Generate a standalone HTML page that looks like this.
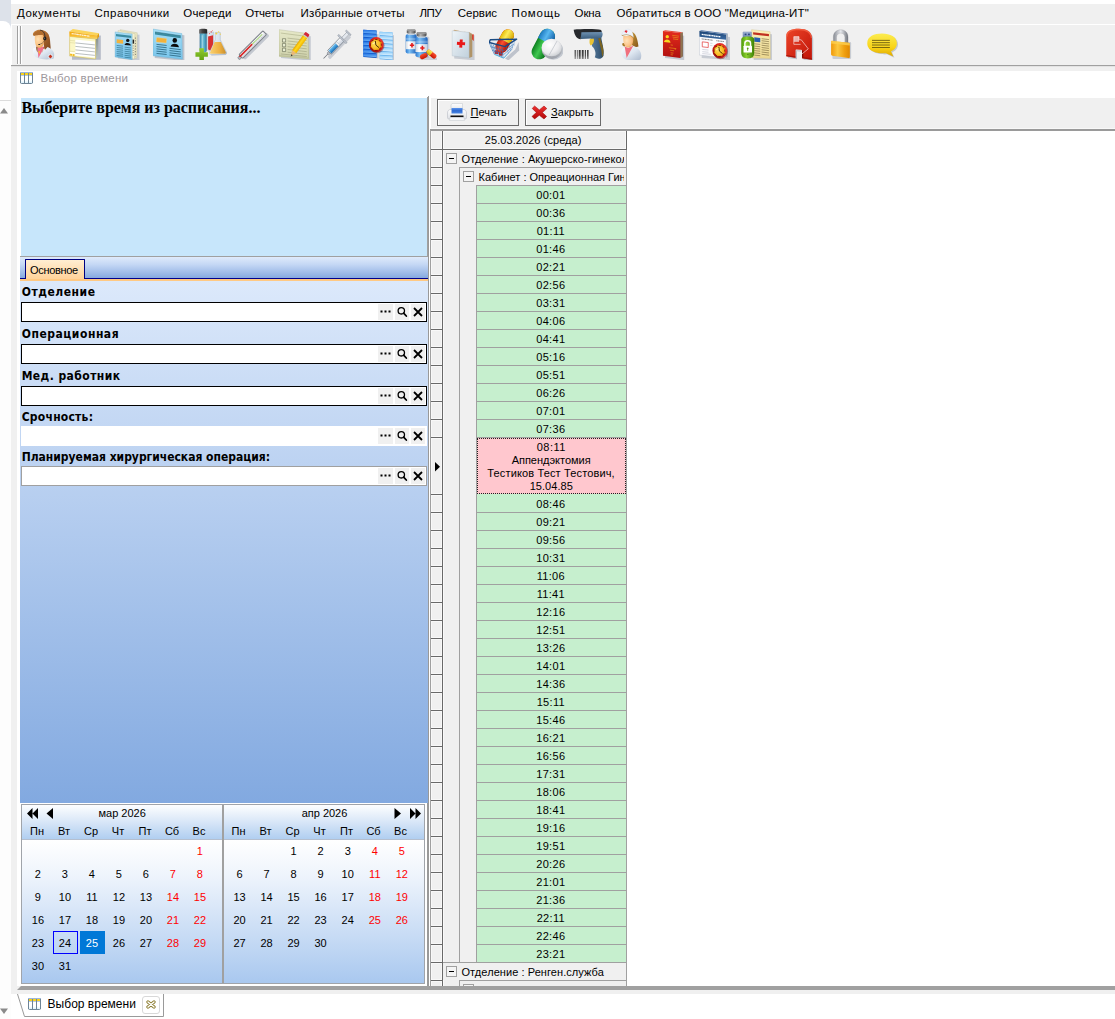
<!DOCTYPE html>
<html lang="ru"><head><meta charset="utf-8"><title>Выбор времени</title>
<style>
html,body{margin:0;padding:0}
body{width:1115px;height:1019px;overflow:hidden;background:#fff;position:relative;font-family:"Liberation Sans",sans-serif;font-size:11px;color:#000}
div,span,svg{position:absolute;box-sizing:border-box}
.t{white-space:nowrap;line-height:1}
.m{font-size:11.5px}
.b{font-family:"DejaVu Sans Condensed","DejaVu Sans","Liberation Sans",sans-serif;font-weight:bold;font-size:12px}
.r{color:#f00}
.c{text-align:center}
u{text-decoration:underline}
</style></head><body>

<div style="left:0;top:0;width:11px;height:1019px;background:#fdfdfd"></div>
<div style="left:0;top:0;width:11px;height:30px;background:#dde2ea"></div>
<div style="left:-11px;top:21px;width:22px;height:80px;background:#fff;border-radius:0 8px 0 0"></div>
<div style="left:0;top:100px;width:11px;height:1px;background:#dcdcdc"></div>
<svg style="left:0;top:107px" width="9" height="7"><path d="M0 6.5 L4 1 L8 6.5Z" fill="#8a8a8a"/></svg>
<svg style="left:0;top:1008px" width="9" height="7"><path d="M0 0.5 L8 0.5 L4 6Z" fill="#8a8a8a"/></svg>
<div style="left:11px;top:4px;width:1104px;height:20px;background:#f0f0f0"></div>
<div style="left:12px;top:25px;width:1103px;height:40px;background:#f0f0f0"></div>
<div style="left:11px;top:65px;width:1104px;height:1px;background:#a0a0a0"></div>
<div style="left:11px;top:66px;width:1104px;height:1px;background:#e3e3e3"></div>
<div style="left:11px;top:67px;width:1104px;height:927px;background:#f0f0f0"></div>
<div style="left:17px;top:71px;width:1098px;height:27px;background:#fff"></div>
<div style="left:17px;top:96px;width:411px;height:890px;background:#fff"></div>
<span id="t1" class="t m" style="left:17px;top:8.4px;letter-spacing:0.498px;">Документы</span>
<span id="t2" class="t m" style="left:94.5px;top:8.4px;letter-spacing:0.496px;">Справочники</span>
<span id="t3" class="t m" style="left:183.3px;top:8.4px;letter-spacing:0.186px;">Очереди</span>
<span id="t4" class="t m" style="left:245.3px;top:8.4px;letter-spacing:-0.217px;">Отчеты</span>
<span id="t5" class="t m" style="left:300.5px;top:8.4px;letter-spacing:0.251px;">Избранные отчеты</span>
<span id="t6" class="t m" style="left:419.4px;top:8.4px;letter-spacing:-0.356px;">ЛПУ</span>
<span id="t7" class="t m" style="left:457.8px;top:8.4px;letter-spacing:-0.026px;">Сервис</span>
<span id="t8" class="t m" style="left:511.6px;top:8.4px;letter-spacing:0.795px;">Помощь</span>
<span id="t9" class="t m" style="left:574.6px;top:8.4px;letter-spacing:-0.142px;">Окна</span>
<span id="t10" class="t m" style="left:616.5px;top:8.4px;letter-spacing:0.163px;">Обратиться в ООО &quot;Медицина-ИТ&quot;</span>
<div style="left:17px;top:26px;width:1px;height:38px;background:#a0a0a0"></div>
<div style="left:18px;top:26px;width:1px;height:38px;background:#fff"></div>
<div style="left:20px;top:26px;width:1px;height:38px;background:#a0a0a0"></div>
<div style="left:21px;top:26px;width:1px;height:38px;background:#fff"></div>
<svg style="left:27px;top:28px" width="32" height="32" viewBox="0 0 32 32"><defs><linearGradient id="opc" x1="0" y1="0" x2="1" y2="1"><stop offset="0" stop-color="#fbfdff"/><stop offset="0.5" stop-color="#dfe8f2"/><stop offset="1" stop-color="#aebccf"/></linearGradient><linearGradient id="oph" x1="0" y1="0" x2="1" y2="1"><stop offset="0" stop-color="#c9853f"/><stop offset="0.5" stop-color="#a9652b"/><stop offset="1" stop-color="#7a431c"/></linearGradient><radialGradient id="opf" cx="0.35" cy="0.35" r="0.75"><stop offset="0" stop-color="#ffe0b4"/><stop offset="0.6" stop-color="#fbc382"/><stop offset="1" stop-color="#e89a50"/></radialGradient></defs><path d="M10.5 2 C7.5 3 5.2 5.2 6.2 7.2 C7 8 8 7.4 8.6 7.2 L16.5 9 L17 19 C17.2 21.5 19 23.2 21 22.6 C23 22 24 21 23.6 19.2 C23 14 23.4 10.5 21.6 6.6 C20 3.2 16 0.8 10.5 2Z" fill="url(#oph)"/><path d="M6 20.4 C5.6 24 6.6 27.6 8.6 29 C12 31.4 21 32.4 26.6 30.6 C27.4 27.6 27.6 24.6 25.6 22.6 C24 20.6 22 19.4 20.6 19 L16 24 L11 20 C9 19.6 7 19.8 6 20.4Z" fill="url(#opc)"/><path d="M10.4 18.6 L11.4 30 L17.6 18.8Z" fill="#f2708c"/><path d="M11.4 23.5 l.9 2.8 l.9 -3.6z" fill="#fbc02a"/><path d="M9.2 18.6 C9 21 9.6 23 10.6 24.6 L10.6 19Z M16.4 19.6 C16.8 22 15.6 24 14.6 25 L17.6 19Z" fill="#8c5224"/><path d="M8 7.6 C7.6 11 7.8 14.6 8.8 17.2 C10 19.6 12.6 20.6 14.4 19.6 C16.4 18.4 17.2 15.6 17.2 12.6 C17.2 10 16.8 8 15.6 6.6Z" fill="url(#opf)"/><path d="M6.2 7 C7 4.6 10 2.6 14 3.2 C16 3.6 17.4 5 17.8 7 C15 6.6 11.4 6.8 8.4 7.6 C7.4 8 6.4 7.8 6.2 7Z" fill="#b06c2e"/><path d="M13.2 2.2 C16.6 2.6 18.2 6 17.9 9.4" fill="none" stroke="#2a2a2a" stroke-width="0.9"/><ellipse cx="17.8" cy="10.6" rx="1.6" ry="2" fill="#1e1e1e"/><ellipse cx="17.5" cy="10.2" rx=".6" ry=".8" fill="#666"/><path d="M17.4 12.6 C16.6 14.6 14.6 15.8 12.4 16.4" fill="none" stroke="#3a3a3a" stroke-width=".5"/><ellipse cx="12.1" cy="16.5" rx="1" ry=".6" fill="#161616"/><path d="M23.4 26.6 L25.3 28.5 L23.4 30.4 L21.5 28.5Z" fill="#c8331c"/><circle cx="23.4" cy="28.5" r="2.3" fill="none" stroke="#fff" stroke-width=".5" opacity=".7"/></svg>
<svg style="left:69px;top:28px" width="32" height="32" viewBox="0 0 32 32"><defs><linearGradient id="ytt" x1="0" y1="0" x2="0" y2="1"><stop offset="0" stop-color="#f3a712"/><stop offset="0.5" stop-color="#f7b828"/><stop offset="1" stop-color="#fbd662"/></linearGradient><linearGradient id="yts" x1="0" y1="0" x2="0" y2="1"><stop offset="0" stop-color="#88928f"/><stop offset="1" stop-color="#bcc6c4"/></linearGradient></defs><path d="M3 9 L31.8 7.5 L31.8 31.8 L3 31.8Z" fill="#7c86a0" opacity=".5"/><path d="M26.6 11 L29.3 9.5 L29.3 29.2 L26.6 31Z" fill="url(#yts)"/><path d="M0.6 8.4 L26.6 11 L26.6 31 L0.6 28Z" fill="#fbf7c6" stroke="#cdb54e" stroke-width=".5"/><path d="M6.4 11.6 L25.9 13.6 L25.9 29.6 L6.4 27.4Z" fill="#fff"/><path d="M6.4 14.9 L25.9 16.9M6.4 18.4 L25.9 20.4M6.4 21.9 L25.9 23.9M6.4 25.4 L25.9 27.4" stroke="#a8aeb0" stroke-width=".8"/><path d="M1 12.4 L6 12.9M1 14.6 L6 15.1M1 23.2 L6 23.7" stroke="#ddd8a0" stroke-width=".6"/><path d="M1 24 L6 24.5 L6 25.8 L1 25.3Z" fill="#fff"/><path d="M1.1 25.8 L3 26 L3 27.8 L1.1 27.6Z M3.6 26.1 L5.5 26.3 L5.5 28.1 L3.6 27.9Z" fill="#f3b81c"/><path d="M0.3 3.4 L3.9 1.1 L30 5.2 L28.2 7.5Z" fill="#fbd45a"/><path d="M28.2 7.5 L30 5.2 L30 8.8 L28.2 11.1Z" fill="#e09a0c"/><path d="M0.3 3.4 L28.2 7.5 L28.2 11.1 L0.3 8.4Z" fill="url(#ytt)"/><path d="M2.6 5.6 L21 8.2" stroke="#fff" stroke-width="1.3" opacity=".8" stroke-dasharray="2.2 .5 1.6 .4 2.6 .5"/></svg>
<svg style="left:111px;top:28px" width="32" height="32" viewBox="0 0 32 32"><defs><linearGradient id="ppb" x1="0" y1="0" x2="0" y2="1"><stop offset="0" stop-color="#a4dcf6"/><stop offset="1" stop-color="#74c0e8"/></linearGradient></defs><g transform="scale(0.11299) translate(-787.70,-35.4)"><path d="M850 75 L1040 95 L1040 325 L850 305Z" fill="#8c96a8" opacity=".4"/><path d="M870 50 L1020 78 L1016 303 L870 290Z" fill="#ece8c4" stroke="#b8b490" stroke-width="3"/><path d="M850 58 L1000 86 L996 310 L850 292Z" fill="#f4f0d0" stroke="#b8b490" stroke-width="3"/><path d="M1004 120v170" stroke="#555" stroke-width="6" stroke-dasharray="10 14"/><path d="M978 138 h14 v36 h-14z" fill="#222"/><path d="M984 190v100" stroke="#444" stroke-width="6" stroke-dasharray="8 12"/><path d="M824 70 L975 88 L975 316 L824 292Z" fill="url(#ppb)" stroke="#5aa6c8" stroke-width="3"/><path d="M832 88 L967 104 L967 125 L832 108Z" fill="#3b8ca2"/><path d="M838 135 L895 141 L895 175 L838 169Z" fill="#f2b23c"/><circle cx="936" cy="145" r="15" fill="#111"/><path d="M908 185 C911 160 961 162 964 190Z" fill="#111"/><path d="M838 190 L895 196M838 208 L895 214M838 226 L895 232M838 244 L895 250M838 262 L895 268M838 280 L895 285M908 205 L964 212M908 223 L964 230M908 241 L964 248M908 259 L964 266M908 277 L964 284M908 294 L964 300" stroke="#2c6f88" stroke-width="6"/></g></svg>
<svg style="left:153px;top:28px" width="32" height="32" viewBox="0 0 32 32"><defs><linearGradient id="pab" x1="0" y1="0" x2="0" y2="1"><stop offset="0" stop-color="#a6dff8"/><stop offset="1" stop-color="#78c4ea"/></linearGradient></defs><g transform="scale(0.11299) translate(-44.25,-35.4)"><path d="M60 70 L322 100 L322 328 L60 300Z" fill="#8c96a8" opacity=".5"/><path d="M45 45 L300 85 L305 312 L45 282Z" fill="url(#pab)" stroke="#5aa6c8" stroke-width="3"/><path d="M62 70 L290 104 L290 126 L62 92Z" fill="#3b8ca2"/><path d="M62 70 L290 104" stroke="#1f5a6a" stroke-width="4"/><rect x="76" y="120" width="90" height="40" rx="6" transform="rotate(5 76 120)" fill="#f2b23c" stroke="#f8d890" stroke-width="3"/><circle cx="237" cy="145" r="20" fill="#0a0a0a"/><path d="M200 200 C203 165 270 165 274 205Z" fill="#0a0a0a"/><path d="M75 180 L165 190M75 200 L165 210M75 220 L165 230M75 240 L165 250M75 260 L165 270M190 215 L290 227M190 235 L290 247M190 255 L290 267M190 275 L290 287" stroke="#235f78" stroke-width="7"/></g></svg>
<svg style="left:195px;top:28px" width="32" height="32" viewBox="0 0 32 32"><defs><linearGradient id="fl1" x1="0" y1="0" x2="1" y2="0"><stop offset="0" stop-color="#3c8fb4"/><stop offset="0.5" stop-color="#6cc0d8"/><stop offset="1" stop-color="#2a7aa0"/></linearGradient><linearGradient id="fl2" x1="0" y1="0" x2="1" y2="0"><stop offset="0" stop-color="#e8f0f8"/><stop offset="1" stop-color="#c8d8e8"/></linearGradient><linearGradient id="flc" x1="0" y1="0" x2="1" y2="0"><stop offset="0" stop-color="#777"/><stop offset="0.4" stop-color="#444"/><stop offset="1" stop-color="#222"/></linearGradient><linearGradient id="fl3" x1="0" y1="0" x2="1" y2="0"><stop offset="0" stop-color="#eef4fa"/><stop offset="1" stop-color="#c4d4e4"/></linearGradient><linearGradient id="fl4" x1="0" y1="0" x2="1" y2="0"><stop offset="0" stop-color="#f8d070"/><stop offset="0.6" stop-color="#eeb040"/><stop offset="1" stop-color="#c89030"/></linearGradient><linearGradient id="flp" x1="0" y1="0" x2="0" y2="1"><stop offset="0" stop-color="#92cc30"/><stop offset="1" stop-color="#5fa010"/></linearGradient></defs><g transform="scale(0.11299) translate(-416.00,-35.4)"><path d="M560 250 L700 250 L690 275 L560 280Z" fill="#8c96a8" opacity=".4"/><path d="M528 70 L580 70 L580 225 C580 245 528 245 528 225Z" fill="url(#fl2)" stroke="#9ab" stroke-width="3"/><path d="M532 110 L576 100 L576 222 C576 238 532 238 532 222Z" fill="#d83030"/><circle cx="560" cy="70" r="6" fill="#e04040"/><circle cx="545" cy="85" r="5" fill="#e86060"/><circle cx="570" cy="58" r="4" fill="#e86060"/><path d="M458 80 L520 80 L520 235 C520 258 458 258 458 235Z" fill="url(#fl1)" stroke="#789" stroke-width="3"/><path d="M475 100 L485 100 L485 230 L475 230Z" fill="#fff" opacity=".45"/><path d="M452 50 C452 40 524 40 524 50 L524 85 L452 85Z" fill="url(#flc)"/><path d="M595 75 L640 75 L640 140 L695 250 C700 265 690 270 680 270 L555 270 C545 270 538 262 545 250 L595 140Z" fill="url(#fl3)" stroke="#8aa0b8" stroke-width="3"/><path d="M590 160 L645 160 L688 248 C692 260 686 264 678 264 L558 264 C550 264 546 258 551 248Z" fill="url(#fl4)"/><circle cx="605" cy="85" r="9" fill="#f4d040"/><circle cx="625" cy="70" r="7" fill="#f8e070"/><circle cx="640" cy="90" r="5" fill="#f4d040"/><path d="M455 215 h40 v35 h35 v40 h-35 v35 h-40 v-35 h-35 v-40 h35z" fill="url(#flp)"/></g></svg>
<svg style="left:237px;top:28px" width="32" height="32" viewBox="0 0 32 32"><defs><linearGradient id="th1" x1="0" y1="0" x2="0" y2="1"><stop offset="0" stop-color="#fcfcfc"/><stop offset="1" stop-color="#d4d8de"/></linearGradient></defs><g transform="scale(0.11299) translate(-787.70,-35.4)"><g transform="rotate(-45 930 185)"><rect x="785" y="190" width="305" height="40" rx="12" fill="#8c96a8" opacity=".45"/><rect x="752" y="169" width="40" height="24" rx="8" fill="#b8bcc4" stroke="#7c8088" stroke-width="7"/><rect x="780" y="158" width="300" height="46" rx="10" fill="url(#th1)" stroke="#7c8088" stroke-width="9"/><rect x="800" y="170" width="265" height="12" rx="5" fill="#fff"/><rect x="770" y="168" width="160" height="14" rx="4" fill="#d82828"/><rect x="930" y="172" width="125" height="7" fill="#8cc850"/><path d="M820 188v10M850 188v10M880 188v10M910 188v10M940 188v10M970 188v10M1000 188v10M1030 188v10" stroke="#909498" stroke-width="3"/></g></g></svg>
<svg style="left:279px;top:28px" width="32" height="32" viewBox="0 0 32 32"><defs><linearGradient id="np1" x1="0" y1="0" x2="0" y2="1"><stop offset="0" stop-color="#e6e8c8"/><stop offset="1" stop-color="#cfd2ac"/></linearGradient><linearGradient id="np2" x1="0" y1="0" x2="1" y2="0"><stop offset="0" stop-color="#e8a800"/><stop offset="0.45" stop-color="#ffd820"/><stop offset="1" stop-color="#f0b400"/></linearGradient></defs><g transform="scale(0.11299) translate(-44.25,-35.4)"><path d="M62 75 L325 108 L325 325 L62 300Z" fill="#8c96a8" opacity=".45"/><path d="M45 60 L300 95 L312 312 L45 290Z" fill="#c4c8a0"/><path d="M45 50 L300 85 L305 300 L45 278Z" fill="url(#np1)" stroke="#a8ac84" stroke-width="3"/><path d="M60 80 L290 110" stroke="#a8ac84" stroke-width="5"/><path d="M120 125 L290 145M120 150 L290 170M120 175 L290 195M120 200 L290 220M120 225 L290 245M120 250 L290 268M60 265 L290 288" stroke="#8a8e6c" stroke-width="4"/><path d="M75 130 h28 v30 h-28z M75 172 h28 v30 h-28z M75 214 h28 v30 h-28z" fill="#e8ecd0" stroke="#5a5e48" stroke-width="5"/><g transform="rotate(36 230 175)"><rect x="207" y="60" width="46" height="35" rx="8" fill="#d42838"/><rect x="207" y="88" width="46" height="12" fill="#c8ccd0"/><rect x="207" y="98" width="46" height="165" fill="url(#np2)"/><path d="M207 263 L253 263 L230 312Z" fill="#e8b878"/><path d="M222 295 L238 295 L230 314Z" fill="#333"/></g></g></svg>
<svg style="left:321px;top:28px" width="32" height="32" viewBox="0 0 32 32"><defs><linearGradient id="sy1" x1="0" y1="0" x2="0" y2="1"><stop offset="0" stop-color="#ffffff"/><stop offset="1" stop-color="#c4ccd8"/></linearGradient><linearGradient id="sy2" x1="0" y1="0" x2="0" y2="1"><stop offset="0" stop-color="#7cc4f0"/><stop offset="0.5" stop-color="#3c98d8"/><stop offset="1" stop-color="#1c6cb0"/></linearGradient></defs><g transform="scale(0.11299) translate(-416.00,-35.4)"><g transform="rotate(-46 560 180)"><rect x="420" y="196" width="270" height="30" rx="8" fill="#8c96a8" opacity=".4"/><rect x="385" y="177" width="62" height="6" fill="#6a6e76"/><rect x="440" y="168" width="24" height="24" rx="3" fill="#b8bcc4" stroke="#70767e" stroke-width="4"/><rect x="460" y="156" width="165" height="48" rx="6" fill="url(#sy1)" stroke="#6c747e" stroke-width="6"/><rect x="466" y="162" width="92" height="36" fill="url(#sy2)"/><rect x="556" y="160" width="16" height="40" fill="#f4f6f8" stroke="#8a929c" stroke-width="3"/><rect x="618" y="128" width="14" height="104" rx="5" fill="#c4cad4" stroke="#7a828c" stroke-width="4"/><rect x="632" y="166" width="66" height="28" rx="4" fill="#e4e8ee" stroke="#7a828c" stroke-width="4"/><rect x="694" y="150" width="13" height="60" rx="5" fill="#c4cad4" stroke="#7a828c" stroke-width="4"/></g></g></svg>
<svg style="left:363px;top:28px" width="32" height="32" viewBox="0 0 32 32"><defs><linearGradient id="cc1" x1="1" y1="0" x2="0" y2="1"><stop offset="0" stop-color="#f84838"/><stop offset="0.5" stop-color="#d01818"/><stop offset="1" stop-color="#8c0c0c"/></linearGradient><radialGradient id="cc2" cx="0.4" cy="0.4" r="0.7"><stop offset="0" stop-color="#ffe060"/><stop offset="0.7" stop-color="#f8b820"/><stop offset="1" stop-color="#e89010"/></radialGradient><linearGradient id="ccl" x1="0" y1="0" x2="0" y2="1"><stop offset="0" stop-color="#1a6ce0"/><stop offset="1" stop-color="#74b8fb"/></linearGradient><linearGradient id="ccr" x1="0" y1="0" x2="0" y2="1"><stop offset="0" stop-color="#8cccf8"/><stop offset="1" stop-color="#def2ff"/></linearGradient></defs><g transform="scale(0.11299) translate(-787.70,-35.4)"><path d="M800 80 L925 90 L925 305 L800 290Z" fill="#8c96a8" opacity=".45"/><path d="M945 90 L1062 100 L1062 325 L945 305Z" fill="#8c96a8" opacity=".45"/><path d="M790 50.0 L908 58.0 L908 300.0 L790 292.0Z" fill="#0e54c4"/><path d="M790 50.0 L908 58.0 L908 87.0 L790 79.0Z" fill="url(#ccl)"/><path d="M790 84.6 L908 92.6 L908 121.6 L790 113.6Z" fill="url(#ccl)"/><path d="M790 119.1 L908 127.1 L908 156.2 L790 148.2Z" fill="url(#ccl)"/><path d="M790 153.7 L908 161.7 L908 190.8 L790 182.8Z" fill="url(#ccl)"/><path d="M790 188.3 L908 196.3 L908 225.3 L790 217.3Z" fill="url(#ccl)"/><path d="M790 222.9 L908 230.9 L908 259.9 L790 251.9Z" fill="url(#ccl)"/><path d="M790 257.4 L908 265.4 L908 294.5 L790 286.5Z" fill="url(#ccl)"/><path d="M935 68.0 L1050 76.0 L1050 320.0 L935 312.0Z" fill="#5aa8e8"/><path d="M935 68.0 L1050 76.0 L1050 105.3 L935 97.3Z" fill="url(#ccr)"/><path d="M935 102.9 L1050 110.9 L1050 140.1 L935 132.1Z" fill="url(#ccr)"/><path d="M935 137.7 L1050 145.7 L1050 175.0 L935 167.0Z" fill="url(#ccr)"/><path d="M935 172.6 L1050 180.6 L1050 209.9 L935 201.9Z" fill="url(#ccr)"/><path d="M935 207.4 L1050 215.4 L1050 244.7 L935 236.7Z" fill="url(#ccr)"/><path d="M935 242.3 L1050 250.3 L1050 279.6 L935 271.6Z" fill="url(#ccr)"/><path d="M935 277.1 L1050 285.1 L1050 314.4 L935 306.4Z" fill="url(#ccr)"/><ellipse cx="912" cy="191" rx="66" ry="68" fill="#7a0c0c" opacity=".45"/><ellipse cx="905" cy="183" rx="65" ry="67" fill="url(#cc1)"/><ellipse cx="902" cy="185" rx="50" ry="52" fill="#7a1408"/><circle cx="945.5" cy="200.1" r="9" fill="#e08a08"/><circle cx="921.5" cy="223.8" r="9" fill="#e08a08"/><circle cx="887.9" cy="223.5" r="9" fill="#e08a08"/><circle cx="864.2" cy="199.5" r="9" fill="#e08a08"/><circle cx="864.5" cy="165.9" r="9" fill="#e08a08"/><circle cx="888.5" cy="142.2" r="9" fill="#e08a08"/><circle cx="922.1" cy="142.5" r="9" fill="#e08a08"/><circle cx="945.8" cy="166.5" r="9" fill="#e08a08"/><ellipse cx="902" cy="185" rx="44" ry="46" fill="url(#cc2)"/><path d="M897 153 L902 187 L927 207" fill="none" stroke="#3a2000" stroke-width="8" stroke-linecap="round" stroke-linejoin="round"/><path d="M875 175 l14 -10" stroke="#fff6c8" stroke-width="9" stroke-linecap="round" opacity=".8"/></g></svg>
<svg style="left:405px;top:28px" width="32" height="32" viewBox="0 0 32 32"><defs><linearGradient id="v1b" x1="0" y1="0" x2="1" y2="0"><stop offset="0" stop-color="#2a78d0"/><stop offset="0.35" stop-color="#7cc0f6"/><stop offset="1" stop-color="#1c60b8"/></linearGradient><linearGradient id="v1c" x1="0" y1="0" x2="1" y2="0"><stop offset="0" stop-color="#5a5a5a"/><stop offset="0.4" stop-color="#b4b4b4"/><stop offset="1" stop-color="#4a4a4a"/></linearGradient><linearGradient id="v1l" x1="0" y1="0" x2="1" y2="0"><stop offset="0" stop-color="#d0d8e0"/><stop offset="0.3" stop-color="#ffffff"/><stop offset="1" stop-color="#c8d0dc"/></linearGradient><linearGradient id="v1r" x1="0" y1="0" x2="0" y2="1"><stop offset="0" stop-color="#f85030"/><stop offset="1" stop-color="#c81400"/></linearGradient><linearGradient id="v1y" x1="0" y1="0" x2="0" y2="1"><stop offset="0" stop-color="#fcec60"/><stop offset="1" stop-color="#d8b000"/></linearGradient></defs><g transform="scale(0.11299) translate(-44.25,-35.4)"><path d="M150 275 L335 300 L335 325 L190 325Z" fill="#8c96a8" opacity=".35"/><rect x="150" y="110" width="110" height="190" rx="14" fill="#8c96a8" opacity=".35"/><rect x="50" y="90" width="98" height="170" rx="16" fill="url(#v1b)"/><rect x="50" y="153" width="98" height="70" fill="url(#v1l)"/><path d="M87 181 h12 v-13 h14 v13 h12 v14 h-12 v13 h-14 v-13 h-12z" fill="#e41c1c"/><rect x="50" y="123" width="98" height="22" fill="#fff" opacity=".25"/><rect x="70" y="77" width="58" height="20" fill="#c8d4e0"/><rect x="60" y="49" width="78" height="36" rx="12" fill="url(#v1c)"/><ellipse cx="99" cy="55" rx="39" ry="9" fill="#9a9a9a"/><rect x="137" y="115" width="108" height="177" rx="16" fill="url(#v1b)"/><rect x="137" y="178" width="108" height="70" fill="url(#v1l)"/><path d="M179 206 h12 v-13 h14 v13 h12 v14 h-12 v13 h-14 v-13 h-12z" fill="#e41c1c"/><rect x="137" y="148" width="108" height="22" fill="#fff" opacity=".25"/><rect x="157" y="102" width="68" height="20" fill="#c8d4e0"/><rect x="147" y="74" width="88" height="36" rx="12" fill="url(#v1c)"/><ellipse cx="191" cy="80" rx="44" ry="9" fill="#9a9a9a"/><g transform="rotate(-24 210 284)"><rect x="175" y="263" width="70" height="42" rx="21" fill="url(#v1r)"/></g><g transform="rotate(40 279 266)"><rect x="229" y="245" width="100" height="43" rx="21" fill="url(#v1r)"/><path d="M250 245 h26 v43 h-26 a21 21 0 0 1 0 -43z" fill="url(#v1y)"/></g></g></svg>
<svg style="left:447px;top:28px" width="32" height="32" viewBox="0 0 32 32"><defs><linearGradient id="mb1" x1="0" y1="0" x2="1" y2="1"><stop offset="0" stop-color="#eef4f8"/><stop offset="1" stop-color="#c0d0dc"/></linearGradient></defs><g transform="scale(0.11299) translate(-416.00,-35.4)"><path d="M480 80 L660 100 L660 322 L480 305Z" fill="#8c96a8" opacity=".4"/><path d="M625 95 L652 90 L652 150 L640 138 L625 152Z" fill="#e02818"/><path d="M610 72 L640 88 L640 290 L610 300Z" fill="#b09468"/><path d="M470 60 L480 50 L640 86 L612 74Z" fill="#c8a878"/><path d="M462 60 L612 74 L612 300 L462 282Z" fill="url(#mb1)" stroke="#a8b8c4" stroke-width="3"/><path d="M527 160 h-23 v26 h23 v23 h26 v-23 h23 v-26 h-23 v-23 h-26z" transform="rotate(4 540 173)" fill="#e81818"/></g></svg>
<svg style="left:489px;top:28px" width="32" height="32" viewBox="0 0 32 32"><defs><linearGradient id="bk1" x1="0" y1="0" x2="1" y2="0"><stop offset="0" stop-color="#e4bc08"/><stop offset="0.4" stop-color="#fcec58"/><stop offset="1" stop-color="#d4a400"/></linearGradient><linearGradient id="bk2" x1="0" y1="0" x2="1" y2="0"><stop offset="0" stop-color="#c01c04"/><stop offset="0.4" stop-color="#fc5030"/><stop offset="1" stop-color="#a80c00"/></linearGradient></defs><g transform="scale(0.11299) translate(-787.70,-35.4)"><path d="M930 305 L1020 225 L1050 160 L1055 235 L960 322Z" fill="#8c96a8" opacity=".5"/><path d="M835 268 L789 165 L800 140 L1032 134 L992 222 L918 302Z" fill="#dfe6ee" opacity=".55"/><g transform="rotate(29 925 152)"><rect x="872" y="38" width="108" height="225" rx="54" fill="url(#bk2)"/><path d="M872 150 h108 v-58 a54 54 0 0 0 -108 0z" fill="url(#bk1)"/></g><rect x="838" y="232" width="34" height="34" rx="8" fill="#d81c10"/><rect x="876" y="246" width="32" height="34" rx="8" fill="#c81408"/><path d="M806 178 L846 262M826 186 L862 276M850 192 L880 286M876 198 L900 294M902 204 L912 298M789 165 L835 268 L918 302 L992 222M800 200 L922 236 L1008 178M814 232 L920 268 L1000 200" fill="none" stroke="#2c70b8" stroke-width="5"/><path d="M940 190 L960 262M965 175 L978 240M990 160 L996 218M1012 146 L1008 196" fill="none" stroke="#3c80c4" stroke-width="4" opacity=".8"/><path d="M789 164 L799 140 L1032 134 L929 200Z" fill="none" stroke="#1a4a82" stroke-width="13" stroke-linejoin="round"/><path d="M835 268 L918 302 L950 268" fill="none" stroke="#30c0e8" stroke-width="5" opacity=".8"/></g></svg>
<svg style="left:531px;top:28px" width="32" height="32" viewBox="0 0 32 32"><defs><linearGradient id="pl1" x1="0" y1="0" x2="1" y2="0"><stop offset="0" stop-color="#1c78c0"/><stop offset="0.45" stop-color="#58b8f0"/><stop offset="1" stop-color="#1460a8"/></linearGradient><linearGradient id="pl2" x1="0" y1="0" x2="1" y2="0"><stop offset="0" stop-color="#0c8020"/><stop offset="0.45" stop-color="#40c850"/><stop offset="1" stop-color="#087018"/></linearGradient><linearGradient id="pl3" x1="0" y1="0" x2="0" y2="1"><stop offset="0" stop-color="#d8dce0"/><stop offset="1" stop-color="#9ca0a8"/></linearGradient><radialGradient id="pl4" cx="0.4" cy="0.35" r="0.75"><stop offset="0" stop-color="#ffffff"/><stop offset="0.6" stop-color="#ececee"/><stop offset="1" stop-color="#c4c8cc"/></radialGradient></defs><g transform="scale(0.11299) translate(-44.25,-35.4)"><ellipse cx="240" cy="235" rx="92" ry="82" fill="#8c96a8" opacity=".45"/><g transform="rotate(28 150 178)"><rect x="85" y="32" width="135" height="288" rx="67" fill="url(#pl2)"/><path d="M85 150 h135 v-51 a67 67 0 0 0 -135 0z" fill="url(#pl1)"/></g><ellipse cx="230" cy="222" rx="92" ry="88" fill="url(#pl3)"/><ellipse cx="227" cy="208" rx="89" ry="78" fill="url(#pl4)"/><path d="M205 275 L275 150" stroke="#b8bcc4" stroke-width="6"/></g></svg>
<svg style="left:573px;top:28px" width="32" height="32" viewBox="0 0 32 32"><defs><linearGradient id="sc1" x1="0" y1="0" x2="0" y2="1"><stop offset="0" stop-color="#7498b8"/><stop offset="1" stop-color="#3a5c7c"/></linearGradient><linearGradient id="sc2" x1="0" y1="0" x2="1" y2="0"><stop offset="0" stop-color="#5a7e9e"/><stop offset="0.6" stop-color="#3e6080"/><stop offset="1" stop-color="#2c4860"/></linearGradient><linearGradient id="sc3" x1="0" y1="0" x2="0" y2="1"><stop offset="0" stop-color="#333"/><stop offset="0.6" stop-color="#4a4a4a"/><stop offset="1" stop-color="#8c8c8c"/></linearGradient></defs><g transform="scale(0.07536) translate(-66.35,-53.08)"><path d="M300 188 L442 180 C448 250 482 330 472 420 C452 468 392 472 355 442 C378 400 362 335 322 300 C308 262 330 232 300 188Z" fill="url(#sc2)"/><path d="M402 190 C412 262 452 332 452 440 C466 412 474 380 470 348 C462 280 432 232 428 184Z" fill="#7c6420"/><path d="M290 196 L342 192 C352 232 332 272 300 286 C280 262 284 222 290 196Z" fill="#e8c234"/><path d="M172 104 L446 98 C468 122 462 162 440 186 L300 192 L168 198Z" fill="url(#sc1)"/><path d="M75 76 C180 64 380 64 440 78 L448 106 L178 108 L168 202 C120 202 86 152 75 76Z" fill="#26292d"/><path d="M88 345h15v120h-15zM118 345h10v120h-10zM143 345h25v120h-25zM183 345h25v120h-25zM223 345h15v120h-15zM253 345h20v120h-20z" fill="url(#sc3)"/></g></svg>
<svg style="left:615px;top:28px" width="32" height="32" viewBox="0 0 32 32"><defs><linearGradient id="nuc" x1="0" y1="0" x2="1" y2="1"><stop offset="0" stop-color="#fbfdff"/><stop offset="0.5" stop-color="#dde6f0"/><stop offset="1" stop-color="#aab8cc"/></linearGradient><linearGradient id="nuh" x1="0" y1="0" x2="1" y2="1"><stop offset="0" stop-color="#c89a3c"/><stop offset="1" stop-color="#86581a"/></linearGradient><radialGradient id="nuf" cx="0.35" cy="0.4" r="0.75"><stop offset="0" stop-color="#ffe2b8"/><stop offset="0.6" stop-color="#fbc488"/><stop offset="1" stop-color="#e89c54"/></radialGradient></defs><g transform="scale(0.07536) translate(-623.7,-53.08)"><path d="M830 100 C900 110 925 200 935 300 C900 310 870 300 850 280 L840 150Z" fill="url(#nuh)"/><path d="M722 255 C715 280 725 295 760 300 L760 250Z" fill="#a87a28"/><path d="M708 360 C700 400 720 450 765 470 C830 495 920 490 962 472 C980 430 975 380 940 340 C920 318 895 305 880 300 L800 360 L750 305 C730 315 712 335 708 360Z" fill="url(#nuc)"/><path d="M752 300 L778 452 L868 284 L800 320Z" fill="#f0707e"/><path d="M735 160 C728 210 735 260 760 292 C785 322 820 318 845 285 C868 250 870 200 860 160Z" fill="url(#nuf)"/><path d="M715 158 C760 135 830 140 862 182 L868 150 C830 118 760 115 715 140Z" fill="#a87c24"/><path d="M714 150 C720 110 750 72 792 68 C835 70 862 100 870 178 C835 135 765 128 714 150Z" fill="#eef3fb" stroke="#c0c8d8" stroke-width="3"/><path d="M752 92 h12 v-12 h14 v12 h12 v13 h-12 v12 h-14 v-12 h-12z" fill="#e0202c" transform="rotate(-12 771 98)"/></g></svg>
<svg style="left:657px;top:28px" width="32" height="32" viewBox="0 0 32 32"><defs><linearGradient id="rb1" x1="0" y1="0" x2="0" y2="1"><stop offset="0" stop-color="#e42c1c"/><stop offset="1" stop-color="#b01010"/></linearGradient></defs><g transform="scale(0.11299) translate(-44.25,-35.4)"><path d="M115 85 L285 105 L285 320 L115 302Z" fill="#8c96a8" opacity=".45"/><path d="M250 80 L272 74 L272 288 L250 300Z" fill="#6e4a28"/><path d="M262 77 L262 294" stroke="#c8b48c" stroke-width="4"/><path d="M97 62 L118 55 L272 74 L250 80Z" fill="#e84a38"/><path d="M97 62 L250 80 L250 300 L97 282Z" fill="url(#rb1)"/><circle cx="135" cy="112" r="15" fill="#f8d820"/><path d="M106 160 C108 128 160 128 164 165Z" fill="#f8d820"/><path d="M178 100 L238 108M182 116 L236 123M186 132 L232 138M165 185 L185 188M150 210 L215 218M200 222 L212 224M160 232 L195 237M165 255 L190 258M165 272 L185 274" stroke="#f0a818" stroke-width="5"/></g></svg>
<svg style="left:699px;top:28px" width="32" height="32" viewBox="0 0 32 32"><defs><linearGradient id="sht" x1="0" y1="0" x2="0" y2="1"><stop offset="0" stop-color="#1c4474"/><stop offset="1" stop-color="#3c6ca4"/></linearGradient><linearGradient id="sh1" x1="1" y1="0" x2="0" y2="1"><stop offset="0" stop-color="#f84838"/><stop offset="0.5" stop-color="#d01818"/><stop offset="1" stop-color="#8c0c0c"/></linearGradient><radialGradient id="sh2" cx="0.4" cy="0.4" r="0.7"><stop offset="0" stop-color="#ffe060"/><stop offset="0.7" stop-color="#f8b820"/><stop offset="1" stop-color="#e89010"/></radialGradient></defs><g transform="scale(0.11299) translate(-416.00,-35.4)"><path d="M440 90 L690 115 L690 318 L440 300Z" fill="#8c96a8" opacity=".4"/><path d="M655 92 L672 86 L672 290 L655 300Z" fill="#aab4c0"/><path d="M420 62 L438 55 L672 86 L655 92Z" fill="#4870a8"/><path d="M420 62 L655 92 L655 300 L420 275Z" fill="#fcfcfe" stroke="#a8b0c0" stroke-width="3"/><path d="M420 62 L655 92 L655 140 L420 112Z" fill="url(#sht)"/><path d="M440 92 L605 113" stroke="#fff" stroke-width="12" stroke-dasharray="14 3 10 3 16 3 9 3"/><path d="M440 132 L540 144M570 148 L640 156" stroke="#555" stroke-width="7" stroke-dasharray="10 4"/><path d="M445 158 L498 164 L498 208 L445 202Z" fill="#fff" stroke="#e03030" stroke-width="6"/><path d="M445 225 L500 231M445 245 L500 250M445 262 L520 268M515 170 L535 172M515 190 L535 192" stroke="#b8bcc8" stroke-width="5"/><ellipse cx="607" cy="244" rx="66" ry="68" fill="#7a0c0c" opacity=".45"/><ellipse cx="600" cy="236" rx="65" ry="67" fill="url(#sh1)"/><ellipse cx="597" cy="238" rx="50" ry="52" fill="#7a1408"/><circle cx="640.5" cy="253.1" r="9" fill="#e08a08"/><circle cx="616.5" cy="276.8" r="9" fill="#e08a08"/><circle cx="582.9" cy="276.5" r="9" fill="#e08a08"/><circle cx="559.2" cy="252.5" r="9" fill="#e08a08"/><circle cx="559.5" cy="218.9" r="9" fill="#e08a08"/><circle cx="583.5" cy="195.2" r="9" fill="#e08a08"/><circle cx="617.1" cy="195.5" r="9" fill="#e08a08"/><circle cx="640.8" cy="219.5" r="9" fill="#e08a08"/><ellipse cx="597" cy="238" rx="44" ry="46" fill="url(#sh2)"/><path d="M592 206 L597 240 L622 260" fill="none" stroke="#3a2000" stroke-width="8" stroke-linecap="round" stroke-linejoin="round"/><path d="M570 228 l14 -10" stroke="#fff6c8" stroke-width="9" stroke-linecap="round" opacity=".8"/></g></svg>
<svg style="left:741px;top:28px" width="32" height="32" viewBox="0 0 32 32"><defs><linearGradient id="us1" x1="0" y1="0" x2="0" y2="1"><stop offset="0" stop-color="#fcf0b8"/><stop offset="1" stop-color="#ecd890"/></linearGradient><linearGradient id="us2" x1="0" y1="0" x2="1" y2="0"><stop offset="0" stop-color="#4c9808"/><stop offset="0.4" stop-color="#8cd030"/><stop offset="1" stop-color="#3c8004"/></linearGradient><linearGradient id="us3" x1="0" y1="0" x2="0" y2="1"><stop offset="0" stop-color="#a8b8d8"/><stop offset="1" stop-color="#6880b0"/></linearGradient></defs><g transform="scale(0.11299) translate(-787.70,-35.4)"><path d="M900 70 L1062 90 L1062 318 L900 318Z" fill="#8c96a8" opacity=".4"/><path d="M882 50 L1045 68 L1048 305 L885 300Z" fill="url(#us1)" stroke="#c8b878" stroke-width="3"/><path d="M895 72 L1035 88 L1035 108 L895 92Z" fill="#c03020"/><path d="M905 118 L958 124 L958 162 L905 156Z" fill="#2860b0"/><path d="M970 130 L1035 138M970 148 L1035 156M905 175 L958 181M970 168 L1035 176M905 195 L958 201M970 188 L1035 196M905 215 L958 221M970 208 L1035 216M905 235 L958 241M970 228 L1035 236M905 255 L958 261M970 248 L1035 256M905 275 L958 281M970 268 L1035 276" stroke="#6a5a30" stroke-width="5"/><rect x="805" y="70" width="75" height="50" rx="4" fill="url(#us3)" stroke="#5870a0" stroke-width="3"/><rect x="820" y="85" width="16" height="14" fill="#2c4880"/><rect x="850" y="85" width="16" height="14" fill="#2c4880"/><path d="M790 140 C790 115 810 110 848 110 C890 110 905 118 905 140 L905 255 C905 295 880 305 848 305 C810 305 790 290 790 255Z" fill="url(#us2)"/><path d="M822 195 L822 170 C822 140 872 140 872 170 L872 195" fill="none" stroke="#fff" stroke-width="13"/><rect x="810" y="192" width="75" height="60" rx="5" fill="#fff"/><circle cx="847" cy="215" r="8" fill="#58a010"/><rect x="843" y="217" width="8" height="20" fill="#58a010"/><path d="M838 272 l10 -8 l10 8z" fill="#3c7808"/></g></svg>
<svg style="left:783px;top:28px" width="32" height="32" viewBox="0 0 32 32"><defs><linearGradient id="ra1" x1="0" y1="0" x2="1" y2="1"><stop offset="0" stop-color="#ec4428"/><stop offset="1" stop-color="#c01408"/></linearGradient></defs><g transform="scale(0.11299) translate(-44.25,-35.4)"><path d="M88 300 L88 125 C88 75 130 60 200 60 C270 60 312 85 312 140 L312 326 L226 316 L226 246 L168 242 L168 312Z" fill="#8c96a8" opacity=".5"/><path d="M73 286 L73 110 C73 60 115 43 185 43 C255 43 300 70 300 125 L300 316 L213 304 L213 232 L155 228 L155 298Z" fill="url(#ra1)"/><path d="M213 232 L213 304 L224 299 L224 236Z" fill="#7c0a04"/><path d="M73 286 L155 298 L155 288 L73 274Z M213 304 L300 316 L300 304 L213 292Z" fill="#9c1008" opacity=".8"/><path d="M73 110 C73 60 115 43 185 43 C255 43 300 70 300 125 L290 125 C288 80 250 58 185 56 C120 56 86 72 84 112Z" fill="#f86848" opacity=".7"/><path d="M140 112 L186 112 L186 158 L140 158Z" fill="#f0c8c4" opacity=".85"/><path d="M140 112 L186 112 L186 140 L206 140 L268 220 L208 268 L208 232 L160 228 M140 112 L140 180 L200 180" fill="none" stroke="#fff" stroke-width="5" stroke-linejoin="round"/></g></svg>
<svg style="left:825px;top:28px" width="32" height="32" viewBox="0 0 32 32"><defs><linearGradient id="pk1" x1="0" y1="0" x2="1" y2="0"><stop offset="0" stop-color="#888c94"/><stop offset="0.5" stop-color="#e8eaee"/><stop offset="1" stop-color="#70747c"/></linearGradient><linearGradient id="pk2" x1="0" y1="0" x2="1" y2="0"><stop offset="0" stop-color="#f09808"/><stop offset="0.35" stop-color="#fcc840"/><stop offset="0.7" stop-color="#f0a010"/><stop offset="1" stop-color="#e08800"/></linearGradient></defs><g transform="scale(0.11299) translate(-416.00,-35.4)"><path d="M490 175 L490 115 C490 30 620 30 620 115 L620 175 L592 175 L592 118 C592 68 518 68 518 118 L518 175Z" fill="url(#pk1)" stroke="#70747c" stroke-width="2"/><rect x="482" y="160" width="165" height="150" rx="10" fill="#8c96a8" opacity=".4"/><path d="M470 158 C470 150 478 148 485 150 L625 165 C633 166 636 170 636 178 L636 292 C636 300 630 304 622 302 L482 282 C474 280 470 276 470 268Z" fill="url(#pk2)"/><path d="M470 158 C470 150 478 148 485 150 L625 165 C633 166 636 170 636 178 L636 190 L470 172Z" fill="#fcd050" opacity=".8"/></g></svg>
<svg style="left:867px;top:28px" width="32" height="32" viewBox="0 0 32 32"><defs><linearGradient id="bb1" x1="0" y1="0" x2="0" y2="1"><stop offset="0" stop-color="#fcec50"/><stop offset="0.6" stop-color="#f8d418"/><stop offset="1" stop-color="#e0a800"/></linearGradient></defs><g transform="scale(0.11299) translate(-787.70,-35.4)"><path d="M800 178 C800 120 860 95 930 95 C1005 95 1062 125 1062 180 C1062 215 1040 240 1010 252 L1030 298 L965 268 C940 272 800 270 800 178Z" fill="#8c96a8" opacity=".45"/><path d="M790 170 C790 112 850 85 920 85 C995 85 1052 115 1052 170 C1052 205 1030 230 1000 242 L1020 288 L955 258 C930 262 790 262 790 170Z" fill="url(#bb1)"/><path d="M832 145 H990M832 165 H990M832 186 H990M832 208 H990" stroke="#5a4c0c" stroke-width="7"/></g></svg>
<svg style="left:20px;top:72px" width="13" height="12" viewBox="0 0 13 12"><defs><linearGradient id="tg20" x1="0" y1="0" x2="0" y2="1"><stop offset="0" stop-color="#fff"/><stop offset=".6" stop-color="#fff"/><stop offset="1" stop-color="#d6f0fb"/></linearGradient></defs><rect x="0" y="0" width="13" height="4" fill="#9db6d8"/><rect x="0.5" y="3.5" width="12" height="8" rx="1" fill="url(#tg20)" stroke="#6e8496"/><path d="M0.5 1V11M4.5 1V11M8.5 1V11M12.5 1V11" stroke="#6e8496"/><path d="M1 1h3v2h-3zM5 1h3v2h-3zM9 1h3v2h-3z" fill="#f9d21c"/><path d="M1 3.5h3M5 3.5h3M9 3.5h3" stroke="#b4c8e4"/></svg>
<span id="t11" class="t m" style="left:40.6px;top:72.9px;letter-spacing:0.245px;color:#9d979c">Выбор времени</span>
<div style="left:21px;top:98px;width:406px;height:158px;background:#c7e6fb"></div>
<div style="left:20px;top:256px;width:408px;height:1px;background:#a0a0a0"></div>
<span id="t12" class="t " style="left:21.4px;top:100.4px;letter-spacing:-0.027px;font-family:&quot;Liberation Serif&quot;,serif;font-weight:bold;font-size:16px">Выберите время из расписания...</span>
<div style="left:20px;top:257px;width:408px;height:22px;background:linear-gradient(#dfeafb,#c4d7f4 35%,#82a6de)"></div>
<div style="left:20px;top:278px;width:408px;height:1px;background:#00008b"></div>
<div style="left:20px;top:279px;width:408px;height:2px;background:#ffc983"></div>
<div style="left:25px;top:259px;width:60px;height:20px;border:1px solid #000080;border-bottom:none;border-radius:1px 1px 0 0;background:linear-gradient(#ffeed2,#ffd39a)"></div>
<span id="t13" class="t " style="left:30px;top:265px;letter-spacing:-0.326px;">Основное</span>
<div style="left:20px;top:281px;width:408px;height:522px;background:linear-gradient(#dce9fb,#82a9e0)"></div>
<span id="t14" class="t b" style="left:21.7px;top:286px;letter-spacing:0.533px;">Отделение</span>
<div style="left:21px;top:302px;width:406px;height:20px;background:#fff;border:1px solid #000"></div>
<div style="left:378px;top:304px;width:15px;height:16px;background:#f0f0f0"></div>
<div style="left:395px;top:304px;width:14px;height:16px;background:#f0f0f0"></div>
<div style="left:411px;top:304px;width:14px;height:16px;background:#f0f0f0"></div>
<svg style="left:378px;top:304px" width="47" height="16" viewBox="0 0 47 16"><path d="M2.5 7.5h2M6.5 7.5h2M10.5 7.5h2" stroke="#000" stroke-width="2"/><circle cx="23.3" cy="6.8" r="3.2" fill="none" stroke="#000" stroke-width="1.3"/><path d="M25.6 9.2L28.3 12" stroke="#000" stroke-width="1.8" stroke-linecap="round"/><path d="M36 4L44 12M44 4L36 12" stroke="#000" stroke-width="1.8"/></svg>
<span id="t15" class="t b" style="left:21.7px;top:328px;letter-spacing:0.531px;">Операционная</span>
<div style="left:21px;top:344px;width:406px;height:20px;background:#fff;border:1px solid #000"></div>
<div style="left:378px;top:346px;width:15px;height:16px;background:#f0f0f0"></div>
<div style="left:395px;top:346px;width:14px;height:16px;background:#f0f0f0"></div>
<div style="left:411px;top:346px;width:14px;height:16px;background:#f0f0f0"></div>
<svg style="left:378px;top:346px" width="47" height="16" viewBox="0 0 47 16"><path d="M2.5 7.5h2M6.5 7.5h2M10.5 7.5h2" stroke="#000" stroke-width="2"/><circle cx="23.3" cy="6.8" r="3.2" fill="none" stroke="#000" stroke-width="1.3"/><path d="M25.6 9.2L28.3 12" stroke="#000" stroke-width="1.8" stroke-linecap="round"/><path d="M36 4L44 12M44 4L36 12" stroke="#000" stroke-width="1.8"/></svg>
<span id="t16" class="t b" style="left:21.7px;top:370px;letter-spacing:0.425px;">Мед. работник</span>
<div style="left:21px;top:386px;width:406px;height:20px;background:#fff;border:1px solid #000"></div>
<div style="left:378px;top:388px;width:15px;height:16px;background:#f0f0f0"></div>
<div style="left:395px;top:388px;width:14px;height:16px;background:#f0f0f0"></div>
<div style="left:411px;top:388px;width:14px;height:16px;background:#f0f0f0"></div>
<svg style="left:378px;top:388px" width="47" height="16" viewBox="0 0 47 16"><path d="M2.5 7.5h2M6.5 7.5h2M10.5 7.5h2" stroke="#000" stroke-width="2"/><circle cx="23.3" cy="6.8" r="3.2" fill="none" stroke="#000" stroke-width="1.3"/><path d="M25.6 9.2L28.3 12" stroke="#000" stroke-width="1.8" stroke-linecap="round"/><path d="M36 4L44 12M44 4L36 12" stroke="#000" stroke-width="1.8"/></svg>
<span id="t17" class="t b" style="left:21.7px;top:411px;letter-spacing:0.240px;">Срочность:</span>
<div style="left:21px;top:426px;width:406px;height:20px;background:#fff"></div>
<div style="left:378px;top:428px;width:15px;height:16px;background:#f0f0f0"></div>
<div style="left:395px;top:428px;width:14px;height:16px;background:#f0f0f0"></div>
<div style="left:411px;top:428px;width:14px;height:16px;background:#f0f0f0"></div>
<svg style="left:378px;top:428px" width="47" height="16" viewBox="0 0 47 16"><path d="M2.5 7.5h2M6.5 7.5h2M10.5 7.5h2" stroke="#000" stroke-width="2"/><circle cx="23.3" cy="6.8" r="3.2" fill="none" stroke="#000" stroke-width="1.3"/><path d="M25.6 9.2L28.3 12" stroke="#000" stroke-width="1.8" stroke-linecap="round"/><path d="M36 4L44 12M44 4L36 12" stroke="#000" stroke-width="1.8"/></svg>
<span id="t18" class="t b" style="left:21.7px;top:451px;letter-spacing:-0.015px;">Планируемая хирургическая операция:</span>
<div style="left:21px;top:466px;width:406px;height:20px;background:#fff;border:1px solid #a0a0a0"></div>
<div style="left:378px;top:468px;width:15px;height:16px;background:#f0f0f0"></div>
<div style="left:395px;top:468px;width:14px;height:16px;background:#f0f0f0"></div>
<div style="left:411px;top:468px;width:14px;height:16px;background:#f0f0f0"></div>
<svg style="left:378px;top:468px" width="47" height="16" viewBox="0 0 47 16"><path d="M2.5 7.5h2M6.5 7.5h2M10.5 7.5h2" stroke="#000" stroke-width="2"/><circle cx="23.3" cy="6.8" r="3.2" fill="none" stroke="#000" stroke-width="1.3"/><path d="M25.6 9.2L28.3 12" stroke="#000" stroke-width="1.8" stroke-linecap="round"/><path d="M36 4L44 12M44 4L36 12" stroke="#000" stroke-width="1.8"/></svg>
<div style="left:20px;top:803px;width:407px;height:183px;background:#fff"></div>
<div style="left:21px;top:804px;width:404px;height:180px;border:1px solid #a0a4aa;background:#fff"></div>
<div style="left:22px;top:840px;width:402px;height:143px;background:linear-gradient(#ffffff,#eef4fc 25%,#a9c8ef)"></div>
<div style="left:22px;top:805px;width:402px;height:35px;background:linear-gradient(#fdfeff,#dbe8f8 45%,#aecdf0)"></div>
<div style="left:22px;top:839px;width:402px;height:1px;background:#b5bfcf"></div>
<div style="left:222px;top:805px;width:2px;height:178px;background:#a0a0a0"></div>
<svg style="left:26px;top:808px" width="30" height="12" viewBox="0 0 30 12"><path d="M1 5.5L6.5 0V11ZM6.5 5.5L12 0V11ZM20.5 5.5L27 0V11Z" fill="#000"/></svg>
<svg style="left:393px;top:808px" width="30" height="12" viewBox="0 0 30 12"><path d="M8 5.5L1.5 0V11ZM22.5 5.5L17 0V11ZM28 5.5L22.5 0V11Z" fill="#000"/></svg>
<span class="t c " style="left:82.2px;top:808px;width:80px;">мар 2026</span>
<span class="t c " style="left:284.5px;top:808px;width:80px;">апр 2026</span>
<span class="t c " style="left:-3.0px;top:826px;width:80px;">Пн</span>
<span class="t c " style="left:24.0px;top:826px;width:80px;">Вт</span>
<span class="t c " style="left:51.0px;top:826px;width:80px;">Ср</span>
<span class="t c " style="left:78.0px;top:826px;width:80px;">Чт</span>
<span class="t c " style="left:105.0px;top:826px;width:80px;">Пт</span>
<span class="t c " style="left:132.0px;top:826px;width:80px;">Сб</span>
<span class="t c " style="left:159.0px;top:826px;width:80px;">Вс</span>
<span class="t c " style="left:198.5px;top:826px;width:80px;">Пн</span>
<span class="t c " style="left:225.5px;top:826px;width:80px;">Вт</span>
<span class="t c " style="left:252.5px;top:826px;width:80px;">Ср</span>
<span class="t c " style="left:279.5px;top:826px;width:80px;">Чт</span>
<span class="t c " style="left:306.5px;top:826px;width:80px;">Пт</span>
<span class="t c " style="left:333.5px;top:826px;width:80px;">Сб</span>
<span class="t c " style="left:360.5px;top:826px;width:80px;">Вс</span>
<div style="left:53px;top:931px;width:25px;height:23px;border:1px solid #00f"></div>
<div style="left:80px;top:931px;width:25px;height:23px;background:#0078d7"></div>
<span class="t c r" style="left:159.9px;top:846px;width:80px;">1</span>
<span class="t c " style="left:-2.1000000000000014px;top:869px;width:80px;">2</span>
<span class="t c " style="left:24.900000000000006px;top:869px;width:80px;">3</span>
<span class="t c " style="left:51.900000000000006px;top:869px;width:80px;">4</span>
<span class="t c " style="left:78.9px;top:869px;width:80px;">5</span>
<span class="t c " style="left:105.9px;top:869px;width:80px;">6</span>
<span class="t c r" style="left:132.9px;top:869px;width:80px;">7</span>
<span class="t c r" style="left:159.9px;top:869px;width:80px;">8</span>
<span class="t c " style="left:-2.1000000000000014px;top:892px;width:80px;">9</span>
<span class="t c " style="left:24.900000000000006px;top:892px;width:80px;">10</span>
<span class="t c " style="left:51.900000000000006px;top:892px;width:80px;">11</span>
<span class="t c " style="left:78.9px;top:892px;width:80px;">12</span>
<span class="t c " style="left:105.9px;top:892px;width:80px;">13</span>
<span class="t c r" style="left:132.9px;top:892px;width:80px;">14</span>
<span class="t c r" style="left:159.9px;top:892px;width:80px;">15</span>
<span class="t c " style="left:-2.1000000000000014px;top:915px;width:80px;">16</span>
<span class="t c " style="left:24.900000000000006px;top:915px;width:80px;">17</span>
<span class="t c " style="left:51.900000000000006px;top:915px;width:80px;">18</span>
<span class="t c " style="left:78.9px;top:915px;width:80px;">19</span>
<span class="t c " style="left:105.9px;top:915px;width:80px;">20</span>
<span class="t c r" style="left:132.9px;top:915px;width:80px;">21</span>
<span class="t c r" style="left:159.9px;top:915px;width:80px;">22</span>
<span class="t c " style="left:-2.1000000000000014px;top:938px;width:80px;">23</span>
<span class="t c " style="left:24.900000000000006px;top:938px;width:80px;">24</span>
<span class="t c " style="left:51.900000000000006px;top:938px;width:80px;color:#fff">25</span>
<span class="t c " style="left:78.9px;top:938px;width:80px;">26</span>
<span class="t c " style="left:105.9px;top:938px;width:80px;">27</span>
<span class="t c r" style="left:132.9px;top:938px;width:80px;">28</span>
<span class="t c r" style="left:159.9px;top:938px;width:80px;">29</span>
<span class="t c " style="left:-2.1000000000000014px;top:961px;width:80px;">30</span>
<span class="t c " style="left:24.900000000000006px;top:961px;width:80px;">31</span>
<span class="t c " style="left:253.60000000000002px;top:846px;width:80px;">1</span>
<span class="t c " style="left:280.6px;top:846px;width:80px;">2</span>
<span class="t c " style="left:307.7px;top:846px;width:80px;">3</span>
<span class="t c r" style="left:334.8px;top:846px;width:80px;">4</span>
<span class="t c r" style="left:361.8px;top:846px;width:80px;">5</span>
<span class="t c " style="left:199.5px;top:869px;width:80px;">6</span>
<span class="t c " style="left:226.60000000000002px;top:869px;width:80px;">7</span>
<span class="t c " style="left:253.60000000000002px;top:869px;width:80px;">8</span>
<span class="t c " style="left:280.6px;top:869px;width:80px;">9</span>
<span class="t c " style="left:307.7px;top:869px;width:80px;">10</span>
<span class="t c r" style="left:334.8px;top:869px;width:80px;">11</span>
<span class="t c r" style="left:361.8px;top:869px;width:80px;">12</span>
<span class="t c " style="left:199.5px;top:892px;width:80px;">13</span>
<span class="t c " style="left:226.60000000000002px;top:892px;width:80px;">14</span>
<span class="t c " style="left:253.60000000000002px;top:892px;width:80px;">15</span>
<span class="t c " style="left:280.6px;top:892px;width:80px;">16</span>
<span class="t c " style="left:307.7px;top:892px;width:80px;">17</span>
<span class="t c r" style="left:334.8px;top:892px;width:80px;">18</span>
<span class="t c r" style="left:361.8px;top:892px;width:80px;">19</span>
<span class="t c " style="left:199.5px;top:915px;width:80px;">20</span>
<span class="t c " style="left:226.60000000000002px;top:915px;width:80px;">21</span>
<span class="t c " style="left:253.60000000000002px;top:915px;width:80px;">22</span>
<span class="t c " style="left:280.6px;top:915px;width:80px;">23</span>
<span class="t c " style="left:307.7px;top:915px;width:80px;">24</span>
<span class="t c r" style="left:334.8px;top:915px;width:80px;">25</span>
<span class="t c r" style="left:361.8px;top:915px;width:80px;">26</span>
<span class="t c " style="left:199.5px;top:938px;width:80px;">27</span>
<span class="t c " style="left:226.60000000000002px;top:938px;width:80px;">28</span>
<span class="t c " style="left:253.60000000000002px;top:938px;width:80px;">29</span>
<span class="t c " style="left:280.6px;top:938px;width:80px;">30</span>
<div style="left:428px;top:96px;width:1px;height:890px;background:#999"></div>
<div style="left:427px;top:97px;width:1px;height:160px;background:#a0a0a0"></div>
<div style="left:427px;top:803px;width:1px;height:183px;background:#999"></div>
<div style="left:429px;top:96px;width:2px;height:890px;background:#fff"></div>
<div style="left:431px;top:98px;width:684px;height:32px;background:#f0f0f0"></div>
<div style="left:437px;top:99px;width:82px;height:27px;border:1px solid #6a6a6a;background:#f0f0f0;box-shadow:inset 1px 1px 0 #fff"></div>
<div style="left:525px;top:99px;width:76px;height:27px;border:1px solid #6a6a6a;background:#f0f0f0;box-shadow:inset 1px 1px 0 #fff"></div>
<svg style="left:446px;top:102px" width="22" height="20" viewBox="0 0 22 20"><defs><linearGradient id="prb" x1="0" y1="0" x2="0" y2="1"><stop offset="0" stop-color="#5c94ec"/><stop offset="0.5" stop-color="#2c68d0"/><stop offset="1" stop-color="#4c88e4"/></linearGradient><linearGradient id="prw" x1="0" y1="0" x2="0" y2="1"><stop offset="0" stop-color="#ffffff"/><stop offset="1" stop-color="#dcdfe4"/></linearGradient></defs><path d="M6 1.5 L16.5 1.5 L16.5 9 L5 9 L5 3Z" fill="url(#prw)" stroke="#c8ccd2" stroke-width=".6"/><path d="M1.5 11 C1.5 8.5 3 7.5 5 7.5 L17 7.5 C19.5 7.5 20.5 9 20.5 11 L20.5 15.5 C20.5 16.5 20 17 19 17 L3 17 C2 17 1.5 16.5 1.5 15.5Z" fill="url(#prw)" stroke="#b8bcc4" stroke-width=".6"/><rect x="5.5" y="6" width="11" height="5.5" fill="url(#prb)"/><rect x="4.5" y="13.5" width="13" height="1.6" fill="#111"/><path d="M4 15.5 L18 15.5 L18.5 18.5 L3.5 18.5Z" fill="#f4f5f7" stroke="#c4c8ce" stroke-width=".5"/></svg>
<svg style="left:531px;top:105px" width="17" height="15" viewBox="0 0 17 15"><defs><linearGradient id="rx1" x1="0" y1="0" x2="0" y2="1"><stop offset="0" stop-color="#f03030"/><stop offset="1" stop-color="#b00808"/></linearGradient></defs><path d="M1.2 3.4 L3.6 1 L8.3 4.9 L13 1 L15.8 3.6 L11.4 7.6 L15.6 11.4 L13 14 L8.3 10.2 L3.6 14 L1 11.4 L5.3 7.5Z" fill="url(#rx1)" stroke="#900" stroke-width=".5" stroke-linejoin="round"/></svg>
<span id="t19" class="t " style="left:470.5px;top:107px;letter-spacing:0.039px;"><u>П</u>ечать</span>
<span id="t20" class="t " style="left:551px;top:107px;letter-spacing:0.061px;"><u>З</u>акрыть</span>
<div style="left:430px;top:129px;width:685px;height:857px;background:#fff"></div>
<div style="left:431px;top:128px;width:684px;height:1px;background:#f8f8f8"></div>
<div style="left:430px;top:129px;width:685px;height:2px;background:#9a9a9a"></div>
<div style="left:430px;top:131px;width:197px;height:855px;background:#f0f0f0"></div>
<div style="left:430px;top:130px;width:1px;height:856px;background:#a0a0a0"></div>
<div style="left:441px;top:131px;width:1px;height:855px;background:#f8f8f8"></div>
<div style="left:431px;top:131px;width:1px;height:855px;background:#f8f8f8"></div>
<div style="left:442px;top:131px;width:1px;height:855px;background:#696969"></div>
<div style="left:443px;top:131px;width:1px;height:855px;background:#fafafa"></div>
<div style="left:431px;top:148px;width:11px;height:3px;background:#696969;border-top:1px solid #f8f8f8;border-bottom:1px solid #f8f8f8"></div>
<div style="left:431px;top:166px;width:11px;height:3px;background:#696969;border-top:1px solid #f8f8f8;border-bottom:1px solid #f8f8f8"></div>
<div style="left:431px;top:184px;width:11px;height:3px;background:#696969;border-top:1px solid #f8f8f8;border-bottom:1px solid #f8f8f8"></div>
<div style="left:431px;top:202px;width:11px;height:3px;background:#696969;border-top:1px solid #f8f8f8;border-bottom:1px solid #f8f8f8"></div>
<div style="left:431px;top:220px;width:11px;height:3px;background:#696969;border-top:1px solid #f8f8f8;border-bottom:1px solid #f8f8f8"></div>
<div style="left:431px;top:238px;width:11px;height:3px;background:#696969;border-top:1px solid #f8f8f8;border-bottom:1px solid #f8f8f8"></div>
<div style="left:431px;top:256px;width:11px;height:3px;background:#696969;border-top:1px solid #f8f8f8;border-bottom:1px solid #f8f8f8"></div>
<div style="left:431px;top:274px;width:11px;height:3px;background:#696969;border-top:1px solid #f8f8f8;border-bottom:1px solid #f8f8f8"></div>
<div style="left:431px;top:292px;width:11px;height:3px;background:#696969;border-top:1px solid #f8f8f8;border-bottom:1px solid #f8f8f8"></div>
<div style="left:431px;top:310px;width:11px;height:3px;background:#696969;border-top:1px solid #f8f8f8;border-bottom:1px solid #f8f8f8"></div>
<div style="left:431px;top:328px;width:11px;height:3px;background:#696969;border-top:1px solid #f8f8f8;border-bottom:1px solid #f8f8f8"></div>
<div style="left:431px;top:346px;width:11px;height:3px;background:#696969;border-top:1px solid #f8f8f8;border-bottom:1px solid #f8f8f8"></div>
<div style="left:431px;top:364px;width:11px;height:3px;background:#696969;border-top:1px solid #f8f8f8;border-bottom:1px solid #f8f8f8"></div>
<div style="left:431px;top:382px;width:11px;height:3px;background:#696969;border-top:1px solid #f8f8f8;border-bottom:1px solid #f8f8f8"></div>
<div style="left:431px;top:400px;width:11px;height:3px;background:#696969;border-top:1px solid #f8f8f8;border-bottom:1px solid #f8f8f8"></div>
<div style="left:431px;top:418px;width:11px;height:3px;background:#696969;border-top:1px solid #f8f8f8;border-bottom:1px solid #f8f8f8"></div>
<div style="left:431px;top:436px;width:11px;height:3px;background:#696969;border-top:1px solid #f8f8f8;border-bottom:1px solid #f8f8f8"></div>
<div style="left:431px;top:493px;width:11px;height:3px;background:#696969;border-top:1px solid #f8f8f8;border-bottom:1px solid #f8f8f8"></div>
<div style="left:431px;top:511px;width:11px;height:3px;background:#696969;border-top:1px solid #f8f8f8;border-bottom:1px solid #f8f8f8"></div>
<div style="left:431px;top:529px;width:11px;height:3px;background:#696969;border-top:1px solid #f8f8f8;border-bottom:1px solid #f8f8f8"></div>
<div style="left:431px;top:547px;width:11px;height:3px;background:#696969;border-top:1px solid #f8f8f8;border-bottom:1px solid #f8f8f8"></div>
<div style="left:431px;top:565px;width:11px;height:3px;background:#696969;border-top:1px solid #f8f8f8;border-bottom:1px solid #f8f8f8"></div>
<div style="left:431px;top:583px;width:11px;height:3px;background:#696969;border-top:1px solid #f8f8f8;border-bottom:1px solid #f8f8f8"></div>
<div style="left:431px;top:601px;width:11px;height:3px;background:#696969;border-top:1px solid #f8f8f8;border-bottom:1px solid #f8f8f8"></div>
<div style="left:431px;top:619px;width:11px;height:3px;background:#696969;border-top:1px solid #f8f8f8;border-bottom:1px solid #f8f8f8"></div>
<div style="left:431px;top:637px;width:11px;height:3px;background:#696969;border-top:1px solid #f8f8f8;border-bottom:1px solid #f8f8f8"></div>
<div style="left:431px;top:655px;width:11px;height:3px;background:#696969;border-top:1px solid #f8f8f8;border-bottom:1px solid #f8f8f8"></div>
<div style="left:431px;top:673px;width:11px;height:3px;background:#696969;border-top:1px solid #f8f8f8;border-bottom:1px solid #f8f8f8"></div>
<div style="left:431px;top:691px;width:11px;height:3px;background:#696969;border-top:1px solid #f8f8f8;border-bottom:1px solid #f8f8f8"></div>
<div style="left:431px;top:709px;width:11px;height:3px;background:#696969;border-top:1px solid #f8f8f8;border-bottom:1px solid #f8f8f8"></div>
<div style="left:431px;top:727px;width:11px;height:3px;background:#696969;border-top:1px solid #f8f8f8;border-bottom:1px solid #f8f8f8"></div>
<div style="left:431px;top:745px;width:11px;height:3px;background:#696969;border-top:1px solid #f8f8f8;border-bottom:1px solid #f8f8f8"></div>
<div style="left:431px;top:763px;width:11px;height:3px;background:#696969;border-top:1px solid #f8f8f8;border-bottom:1px solid #f8f8f8"></div>
<div style="left:431px;top:781px;width:11px;height:3px;background:#696969;border-top:1px solid #f8f8f8;border-bottom:1px solid #f8f8f8"></div>
<div style="left:431px;top:799px;width:11px;height:3px;background:#696969;border-top:1px solid #f8f8f8;border-bottom:1px solid #f8f8f8"></div>
<div style="left:431px;top:817px;width:11px;height:3px;background:#696969;border-top:1px solid #f8f8f8;border-bottom:1px solid #f8f8f8"></div>
<div style="left:431px;top:835px;width:11px;height:3px;background:#696969;border-top:1px solid #f8f8f8;border-bottom:1px solid #f8f8f8"></div>
<div style="left:431px;top:853px;width:11px;height:3px;background:#696969;border-top:1px solid #f8f8f8;border-bottom:1px solid #f8f8f8"></div>
<div style="left:431px;top:871px;width:11px;height:3px;background:#696969;border-top:1px solid #f8f8f8;border-bottom:1px solid #f8f8f8"></div>
<div style="left:431px;top:889px;width:11px;height:3px;background:#696969;border-top:1px solid #f8f8f8;border-bottom:1px solid #f8f8f8"></div>
<div style="left:431px;top:907px;width:11px;height:3px;background:#696969;border-top:1px solid #f8f8f8;border-bottom:1px solid #f8f8f8"></div>
<div style="left:431px;top:925px;width:11px;height:3px;background:#696969;border-top:1px solid #f8f8f8;border-bottom:1px solid #f8f8f8"></div>
<div style="left:431px;top:943px;width:11px;height:3px;background:#696969;border-top:1px solid #f8f8f8;border-bottom:1px solid #f8f8f8"></div>
<div style="left:431px;top:961px;width:11px;height:3px;background:#696969;border-top:1px solid #f8f8f8;border-bottom:1px solid #f8f8f8"></div>
<div style="left:431px;top:979px;width:11px;height:3px;background:#696969;border-top:1px solid #f8f8f8;border-bottom:1px solid #f8f8f8"></div>
<div style="left:443px;top:148px;width:183px;height:3px;background:#696969;border-top:1px solid #f8f8f8;border-bottom:1px solid #f8f8f8"></div>
<div style="left:443px;top:131px;width:183px;height:1px;background:#f8f8f8"></div>
<div style="left:625px;top:131px;width:1px;height:18px;background:#f8f8f8"></div>
<div style="left:626px;top:131px;width:1px;height:19px;background:#696969"></div>
<div style="left:626px;top:150px;width:1px;height:836px;background:#a0a0a0"></div>
<span id="t21" class="t " style="left:484.8px;top:135px;letter-spacing:0.070px;">25.03.2026 (среда)</span>
<div style="left:459px;top:167px;width:167px;height:1px;background:#a0a0a0"></div>
<div style="left:446px;top:153px;width:11px;height:11px;border:1px solid #a0a0a0;background:#f4f4f4"></div>
<div style="left:449px;top:158px;width:5px;height:1px;background:#000"></div>
<div style="left:459px;top:154px;width:165px;height:14px;overflow:hidden"><span id="t22" class="t " style="left:2.5px;top:0;letter-spacing:0.082px;">Отделение : Акушерско-гинекологическое</span></div>
<div style="left:459px;top:167px;width:1px;height:795px;background:#a0a0a0"></div>
<div style="left:476px;top:185px;width:150px;height:1px;background:#a0a0a0"></div>
<div style="left:463px;top:171px;width:11px;height:11px;border:1px solid #a0a0a0;background:#f4f4f4"></div>
<div style="left:466px;top:176px;width:5px;height:1px;background:#000"></div>
<div style="left:476px;top:172px;width:148px;height:14px;overflow:hidden"><span id="t23" class="t " style="left:2.6px;top:0;letter-spacing:-0.010px;">Кабинет : Опреационная Гинекология</span></div>
<div style="left:476px;top:185px;width:1px;height:777px;background:#a0a0a0"></div>
<div style="left:477px;top:186px;width:149px;height:776px;background:#c6efce"></div>
<div style="left:477px;top:203px;width:149px;height:1px;background:#a0a0a0"></div>
<span class="t c " style="left:510.79999999999995px;top:190px;width:80px;letter-spacing:0.3px">00:01</span>
<div style="left:477px;top:221px;width:149px;height:1px;background:#a0a0a0"></div>
<span class="t c " style="left:510.79999999999995px;top:208px;width:80px;letter-spacing:0.3px">00:36</span>
<div style="left:477px;top:239px;width:149px;height:1px;background:#a0a0a0"></div>
<span class="t c " style="left:510.79999999999995px;top:226px;width:80px;letter-spacing:0.3px">01:11</span>
<div style="left:477px;top:257px;width:149px;height:1px;background:#a0a0a0"></div>
<span class="t c " style="left:510.79999999999995px;top:244px;width:80px;letter-spacing:0.3px">01:46</span>
<div style="left:477px;top:275px;width:149px;height:1px;background:#a0a0a0"></div>
<span class="t c " style="left:510.79999999999995px;top:262px;width:80px;letter-spacing:0.3px">02:21</span>
<div style="left:477px;top:293px;width:149px;height:1px;background:#a0a0a0"></div>
<span class="t c " style="left:510.79999999999995px;top:280px;width:80px;letter-spacing:0.3px">02:56</span>
<div style="left:477px;top:311px;width:149px;height:1px;background:#a0a0a0"></div>
<span class="t c " style="left:510.79999999999995px;top:298px;width:80px;letter-spacing:0.3px">03:31</span>
<div style="left:477px;top:329px;width:149px;height:1px;background:#a0a0a0"></div>
<span class="t c " style="left:510.79999999999995px;top:316px;width:80px;letter-spacing:0.3px">04:06</span>
<div style="left:477px;top:347px;width:149px;height:1px;background:#a0a0a0"></div>
<span class="t c " style="left:510.79999999999995px;top:334px;width:80px;letter-spacing:0.3px">04:41</span>
<div style="left:477px;top:365px;width:149px;height:1px;background:#a0a0a0"></div>
<span class="t c " style="left:510.79999999999995px;top:352px;width:80px;letter-spacing:0.3px">05:16</span>
<div style="left:477px;top:383px;width:149px;height:1px;background:#a0a0a0"></div>
<span class="t c " style="left:510.79999999999995px;top:370px;width:80px;letter-spacing:0.3px">05:51</span>
<div style="left:477px;top:401px;width:149px;height:1px;background:#a0a0a0"></div>
<span class="t c " style="left:510.79999999999995px;top:388px;width:80px;letter-spacing:0.3px">06:26</span>
<div style="left:477px;top:419px;width:149px;height:1px;background:#a0a0a0"></div>
<span class="t c " style="left:510.79999999999995px;top:406px;width:80px;letter-spacing:0.3px">07:01</span>
<div style="left:477px;top:437px;width:149px;height:1px;background:#a0a0a0"></div>
<span class="t c " style="left:510.79999999999995px;top:424px;width:80px;letter-spacing:0.3px">07:36</span>
<div style="left:477px;top:438px;width:149px;height:56px;background:#ffc7ce;border:1px dotted #222"></div>
<span id="t24" class="t " style="left:536.8px;top:442px;letter-spacing:0.452px;">08:11</span>
<span id="t25" class="t " style="left:511.7px;top:455px;letter-spacing:-0.023px;">Аппендэктомия</span>
<span id="t26" class="t " style="left:487.3px;top:468px;letter-spacing:0.144px;">Тестиков Тест Тестович,</span>
<span id="t27" class="t " style="left:529.7px;top:481px;letter-spacing:0.043px;">15.04.85</span>
<svg style="left:435px;top:462px" width="6" height="10"><path d="M0 0L5 4.75L0 9.5Z" fill="#000"/></svg>
<div style="left:477px;top:512px;width:149px;height:1px;background:#a0a0a0"></div>
<span class="t c " style="left:510.79999999999995px;top:499px;width:80px;letter-spacing:0.3px">08:46</span>
<div style="left:477px;top:530px;width:149px;height:1px;background:#a0a0a0"></div>
<span class="t c " style="left:510.79999999999995px;top:517px;width:80px;letter-spacing:0.3px">09:21</span>
<div style="left:477px;top:548px;width:149px;height:1px;background:#a0a0a0"></div>
<span class="t c " style="left:510.79999999999995px;top:535px;width:80px;letter-spacing:0.3px">09:56</span>
<div style="left:477px;top:566px;width:149px;height:1px;background:#a0a0a0"></div>
<span class="t c " style="left:510.79999999999995px;top:553px;width:80px;letter-spacing:0.3px">10:31</span>
<div style="left:477px;top:584px;width:149px;height:1px;background:#a0a0a0"></div>
<span class="t c " style="left:510.79999999999995px;top:571px;width:80px;letter-spacing:0.3px">11:06</span>
<div style="left:477px;top:602px;width:149px;height:1px;background:#a0a0a0"></div>
<span class="t c " style="left:510.79999999999995px;top:589px;width:80px;letter-spacing:0.3px">11:41</span>
<div style="left:477px;top:620px;width:149px;height:1px;background:#a0a0a0"></div>
<span class="t c " style="left:510.79999999999995px;top:607px;width:80px;letter-spacing:0.3px">12:16</span>
<div style="left:477px;top:638px;width:149px;height:1px;background:#a0a0a0"></div>
<span class="t c " style="left:510.79999999999995px;top:625px;width:80px;letter-spacing:0.3px">12:51</span>
<div style="left:477px;top:656px;width:149px;height:1px;background:#a0a0a0"></div>
<span class="t c " style="left:510.79999999999995px;top:643px;width:80px;letter-spacing:0.3px">13:26</span>
<div style="left:477px;top:674px;width:149px;height:1px;background:#a0a0a0"></div>
<span class="t c " style="left:510.79999999999995px;top:661px;width:80px;letter-spacing:0.3px">14:01</span>
<div style="left:477px;top:692px;width:149px;height:1px;background:#a0a0a0"></div>
<span class="t c " style="left:510.79999999999995px;top:679px;width:80px;letter-spacing:0.3px">14:36</span>
<div style="left:477px;top:710px;width:149px;height:1px;background:#a0a0a0"></div>
<span class="t c " style="left:510.79999999999995px;top:697px;width:80px;letter-spacing:0.3px">15:11</span>
<div style="left:477px;top:728px;width:149px;height:1px;background:#a0a0a0"></div>
<span class="t c " style="left:510.79999999999995px;top:715px;width:80px;letter-spacing:0.3px">15:46</span>
<div style="left:477px;top:746px;width:149px;height:1px;background:#a0a0a0"></div>
<span class="t c " style="left:510.79999999999995px;top:733px;width:80px;letter-spacing:0.3px">16:21</span>
<div style="left:477px;top:764px;width:149px;height:1px;background:#a0a0a0"></div>
<span class="t c " style="left:510.79999999999995px;top:751px;width:80px;letter-spacing:0.3px">16:56</span>
<div style="left:477px;top:782px;width:149px;height:1px;background:#a0a0a0"></div>
<span class="t c " style="left:510.79999999999995px;top:769px;width:80px;letter-spacing:0.3px">17:31</span>
<div style="left:477px;top:800px;width:149px;height:1px;background:#a0a0a0"></div>
<span class="t c " style="left:510.79999999999995px;top:787px;width:80px;letter-spacing:0.3px">18:06</span>
<div style="left:477px;top:818px;width:149px;height:1px;background:#a0a0a0"></div>
<span class="t c " style="left:510.79999999999995px;top:805px;width:80px;letter-spacing:0.3px">18:41</span>
<div style="left:477px;top:836px;width:149px;height:1px;background:#a0a0a0"></div>
<span class="t c " style="left:510.79999999999995px;top:823px;width:80px;letter-spacing:0.3px">19:16</span>
<div style="left:477px;top:854px;width:149px;height:1px;background:#a0a0a0"></div>
<span class="t c " style="left:510.79999999999995px;top:841px;width:80px;letter-spacing:0.3px">19:51</span>
<div style="left:477px;top:872px;width:149px;height:1px;background:#a0a0a0"></div>
<span class="t c " style="left:510.79999999999995px;top:859px;width:80px;letter-spacing:0.3px">20:26</span>
<div style="left:477px;top:890px;width:149px;height:1px;background:#a0a0a0"></div>
<span class="t c " style="left:510.79999999999995px;top:877px;width:80px;letter-spacing:0.3px">21:01</span>
<div style="left:477px;top:908px;width:149px;height:1px;background:#a0a0a0"></div>
<span class="t c " style="left:510.79999999999995px;top:895px;width:80px;letter-spacing:0.3px">21:36</span>
<div style="left:477px;top:926px;width:149px;height:1px;background:#a0a0a0"></div>
<span class="t c " style="left:510.79999999999995px;top:913px;width:80px;letter-spacing:0.3px">22:11</span>
<div style="left:477px;top:944px;width:149px;height:1px;background:#a0a0a0"></div>
<span class="t c " style="left:510.79999999999995px;top:931px;width:80px;letter-spacing:0.3px">22:46</span>
<div style="left:477px;top:962px;width:149px;height:1px;background:#a0a0a0"></div>
<span class="t c " style="left:510.79999999999995px;top:949px;width:80px;letter-spacing:0.3px">23:21</span>
<div style="left:443px;top:962px;width:183px;height:18px;background:#f0f0f0"></div>
<div style="left:443px;top:962px;width:183px;height:1px;background:#a0a0a0"></div>
<div style="left:446px;top:966px;width:11px;height:11px;border:1px solid #a0a0a0;background:#f4f4f4"></div>
<div style="left:449px;top:971px;width:5px;height:1px;background:#000"></div>
<span id="t28" class="t " style="left:461.5px;top:967px;letter-spacing:0.068px;">Отделение : Ренген.служба</span>
<div style="left:459px;top:980px;width:167px;height:6px;border:1px solid #a0a0a0;border-bottom:none;border-right:none;background:#f0f0f0"></div>
<div style="left:463px;top:984px;width:11px;height:3px;border:1px solid #a0a0a0;border-bottom:none;background:#f4f4f4"></div>
<svg style="left:16px;top:985px" width="1100" height="6"><path d="M1 5L5 1H1099V5Z" fill="#a0a0a0"/></svg>
<div style="left:11px;top:990px;width:1104px;height:4px;background:#f0f0f0"></div>
<div style="left:11px;top:994px;width:1104px;height:25px;background:#fff"></div>
<svg style="left:15px;top:993px" width="160" height="26"><path d="M2.5 1L9.5 23.5H148.5V1" fill="#fff" stroke="#9a9a9a"/></svg>
<svg style="left:28px;top:998px" width="13" height="12" viewBox="0 0 13 12"><defs><linearGradient id="tg28" x1="0" y1="0" x2="0" y2="1"><stop offset="0" stop-color="#fff"/><stop offset=".6" stop-color="#fff"/><stop offset="1" stop-color="#d6f0fb"/></linearGradient></defs><rect x="0" y="0" width="13" height="4" fill="#9db6d8"/><rect x="0.5" y="3.5" width="12" height="8" rx="1" fill="url(#tg28)" stroke="#6e8496"/><path d="M0.5 1V11M4.5 1V11M8.5 1V11M12.5 1V11" stroke="#6e8496"/><path d="M1 1h3v2h-3zM5 1h3v2h-3zM9 1h3v2h-3z" fill="#f9d21c"/><path d="M1 3.5h3M5 3.5h3M9 3.5h3" stroke="#b4c8e4"/></svg>
<span id="t29" class="t " style="left:47.6px;top:998px;letter-spacing:0.012px;font-size:12px">Выбор времени</span>
<div style="left:142px;top:996px;width:18px;height:18px;border:1px solid #d8d8d8;border-radius:3px;background:#fff"></div>
<svg style="left:146px;top:1000px" width="10" height="9" viewBox="0 0 10 9"><path d="M2 2L8 7M8 2L2 7" stroke="#8a7a2c" stroke-width="3.3" stroke-linecap="round"/><path d="M2 2L8 7M8 2L2 7" stroke="#fff" stroke-width="1.5" stroke-linecap="round"/></svg>
</body></html>
